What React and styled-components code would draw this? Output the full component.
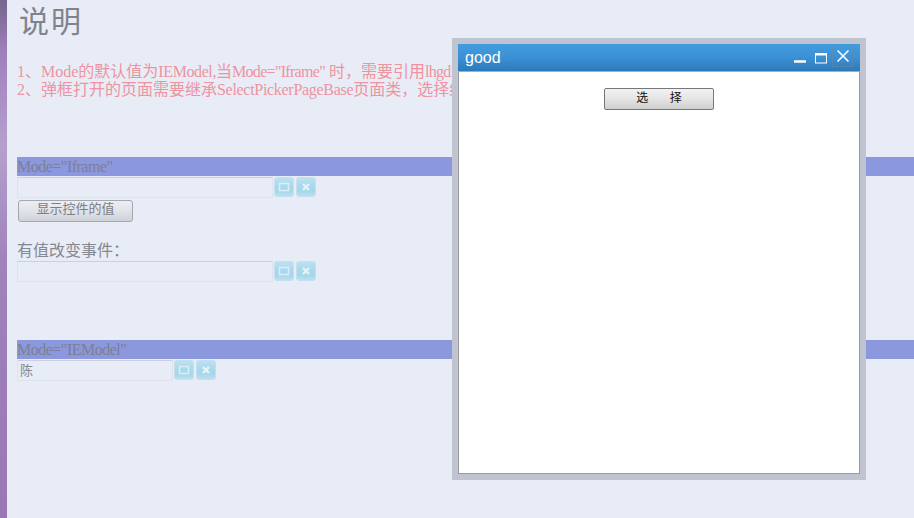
import React from "react";
import styled, { createGlobalStyle } from "styled-components";

const Global = createGlobalStyle`
  html, body { margin: 0; padding: 0; width: 914px; height: 518px; overflow: hidden; background: #e8ecf6; }
  body { font-family: "Liberation Serif", "Noto Sans CJK SC", serif; }
`;
const Page = styled.div`
  position: relative;
  display: flex;
  width: 914px;
  height: 518px;
  overflow: hidden;
`;
const Strip = styled.div`
  flex: 0 0 7px;
  background: linear-gradient(180deg, #76658c 0, #9f7fbd 10%, #b69fce 28%, #a083bb 50%, #9d7cb8 75%, #9a78b4 100%);
`;
const Content = styled.div`
  flex: 1;
  min-width: 0;
  padding: 5px 0 0 10px;
  display: flex;
  flex-direction: column;
  align-items: flex-start;
`;
const Title = styled.h1`
  margin: 0 0 0 2px;
  font-size: 30px;
  line-height: 33px;
  height: 35px;
  font-weight: 400;
  letter-spacing: 2px;
  color: #7f838c;
`;
const Note = styled.div`
  margin-top: 23px;
  font-size: 16px;
  line-height: 18px;
  height: 18px;
  color: #ee939f;
  white-space: nowrap;
`;
const NoteNext = styled(Note)`
  margin-top: 0;
`;
const Tight = styled.span`
  letter-spacing: ${(p) => p.$s}px;
`;
const Band = styled.div`
  align-self: stretch;
  margin-top: ${(p) => p.$top}px;
  height: 19px;
  line-height: 20px;
  font-size: 16px;
  letter-spacing: -0.5px;
  color: #7d7f93;
  background: #8b98de;
`;
const FieldRow = styled.div`
  display: flex;
  align-items: flex-start;
  margin-top: 1px;
  height: 21px;
`;
const Field = styled.div`
  box-sizing: border-box;
  width: ${(p) => p.$w}px;
  height: 21px;
  border: 1px solid #dfe2ec;
  border-top-color: #cdd0da;
  background: #e8ecf6;
  padding-left: 2px;
  font-size: 13px;
  line-height: 19px;
  color: #85888f;
`;
const IconBtn = styled.div`
  box-sizing: border-box;
  width: 20px;
  height: 20px;
  margin-left: ${(p) => p.$ml}px;
  border-radius: 4px;
  background: linear-gradient(180deg, #bde2f0 0, #a9d9ec 45%, #a6d6ea 70%, #c0e2f0 100%);
  box-shadow: inset 0 0 0 1px #c4e0ee;
  display: flex;
  align-items: center;
  justify-content: center;
  svg { display: block; }
`;
const GrayButton = styled.div`
  box-sizing: border-box;
  width: 115px;
  height: 22px;
  margin: 2px 0 0 1px;
  border: 1px solid #a3a7b0;
  border-radius: 3px;
  background: linear-gradient(180deg, #eceef3 0, #e2e4ea 45%, #d0d3da 100%);
  color: #7b7e85;
  font-size: 13px;
  line-height: 16px;
  text-align: center;
`;
const Label = styled.div`
  margin-top: 20px;
  font-size: 16px;
  line-height: 18px;
  height: 18px;
  color: #85888f;
`;
const Dialog = styled.div`
  position: absolute;
  left: 452px;
  top: 38px;
  box-sizing: border-box;
  width: 414px;
  height: 442px;
  border: 6px solid #c0c4d0;
  display: flex;
  flex-direction: column;
  background: #fff;
`;
const Inner = styled.div`
  flex: 1;
  display: flex;
  flex-direction: column;
  border: 1px solid #9a9a9a;
  border-top: none;
  min-height: 0;
`;
const TitleBar = styled.div`
  flex: 0 0 28px;
  margin: 0 -1px;
  box-sizing: border-box;
  background: linear-gradient(180deg, #419de0 0, #3a8fd3 55%, #2d78b9 100%);
  border-bottom: 1px solid #7db8e6;
  display: flex;
  align-items: center;
  padding: 0 7px 0 7px;
  color: #fff;
  font-family: "Liberation Sans", sans-serif;
  font-size: 16px;
`;
const BarTitle = styled.span`
  flex: 1;
`;
const Controls = styled.div`
  display: flex;
  align-items: center;
  gap: 9px;
  svg { display: block; }
`;
const CloseBox = styled.div`
  box-sizing: border-box;
  width: 21px;
  height: 22px;
  margin: -3px 0 0 -4px;
  border: 1px dotted #5f8cb4;
  display: flex;
  align-items: center;
  justify-content: center;
`;
const DialogBody = styled.div`
  flex: 1;
  display: flex;
  justify-content: center;
  align-items: flex-start;
  padding: 16px 0 0 0;
`;
const PickButton = styled.div`
  box-sizing: border-box;
  width: 110px;
  height: 22px;
  border: 1px solid #777;
  border-radius: 2px;
  background: linear-gradient(180deg, #f2f2f2 0, #e6e6e6 45%, #cfcfcf 100%);
  color: #111;
  font-family: "Noto Sans CJK SC", sans-serif;
  font-size: 12px;
  line-height: 16px;
  text-align: center;
  word-spacing: 19px;
`;

const PickIcon = () => (
  <svg width="12" height="10" viewBox="0 0 12 10" fill="none" stroke="#dcedf6" strokeWidth="1.5">
    <rect x="1.5" y="1.5" width="9" height="7" />
  </svg>
);
const ClearIcon = () => (
  <svg width="10" height="10" viewBox="0 0 10 10" fill="none" stroke="#e6f3f9" strokeWidth="2.4">
    <path d="M2 2l6 6M8 2l-6 6" />
  </svg>
);
const Buttons = () => (
  <>
    <IconBtn $ml={1}><PickIcon /></IconBtn>
    <IconBtn $ml={2}><ClearIcon /></IconBtn>
  </>
);

export default function App() {
  return (
    <Page>
      <Global />
      <Strip />
      <Content>
        <Title>说明</Title>
        <Note>1、Mode的默认值为<Tight $s={-0.4}>IEModel,</Tight>当<Tight $s={-0.7}>Mode="Iframe"</Tight> 时，需要引用<Tight $s={-0.7}>lhgdialog</Tight></Note>
        <NoteNext>2、弹框打开的页面需要继承<Tight $s={-0.3}>SelectPickerPageBase</Tight>页面类，选择结果</NoteNext>
        <Band $top={58}>Mode="Iframe"</Band>
        <FieldRow><Field $w={256} /><Buttons /></FieldRow>
        <GrayButton>显示控件的值</GrayButton>
        <Label>有值改变事件：</Label>
        <FieldRow><Field $w={256} /><Buttons /></FieldRow>
        <Band $top={58}>Mode="IEModel"</Band>
        <FieldRow><Field $w={156}>陈</Field><Buttons /></FieldRow>
      </Content>
      <Dialog>
        <Inner>
          <TitleBar>
            <BarTitle>good</BarTitle>
            <Controls>
              <svg width="12" height="12" viewBox="0 0 12 12" stroke="#fff" strokeWidth="2.5" fill="none"><path d="M0 9.5h12" /></svg>
              <svg width="12" height="12" viewBox="0 0 12 12" stroke="#fff" fill="none"><rect x="0.5" y="1.5" width="11" height="9.5" /><path d="M0 2.5h12" strokeWidth="2" /></svg>
              <CloseBox>
                <svg width="12" height="12" viewBox="0 0 12 12" stroke="#fff" strokeWidth="1.5" fill="none"><path d="M0.5 0.5l11 11M11.5 0.5l-11 11" /></svg>
              </CloseBox>
            </Controls>
          </TitleBar>
          <DialogBody>
            <PickButton>选 择</PickButton>
          </DialogBody>
        </Inner>
      </Dialog>
    </Page>
  );
}
